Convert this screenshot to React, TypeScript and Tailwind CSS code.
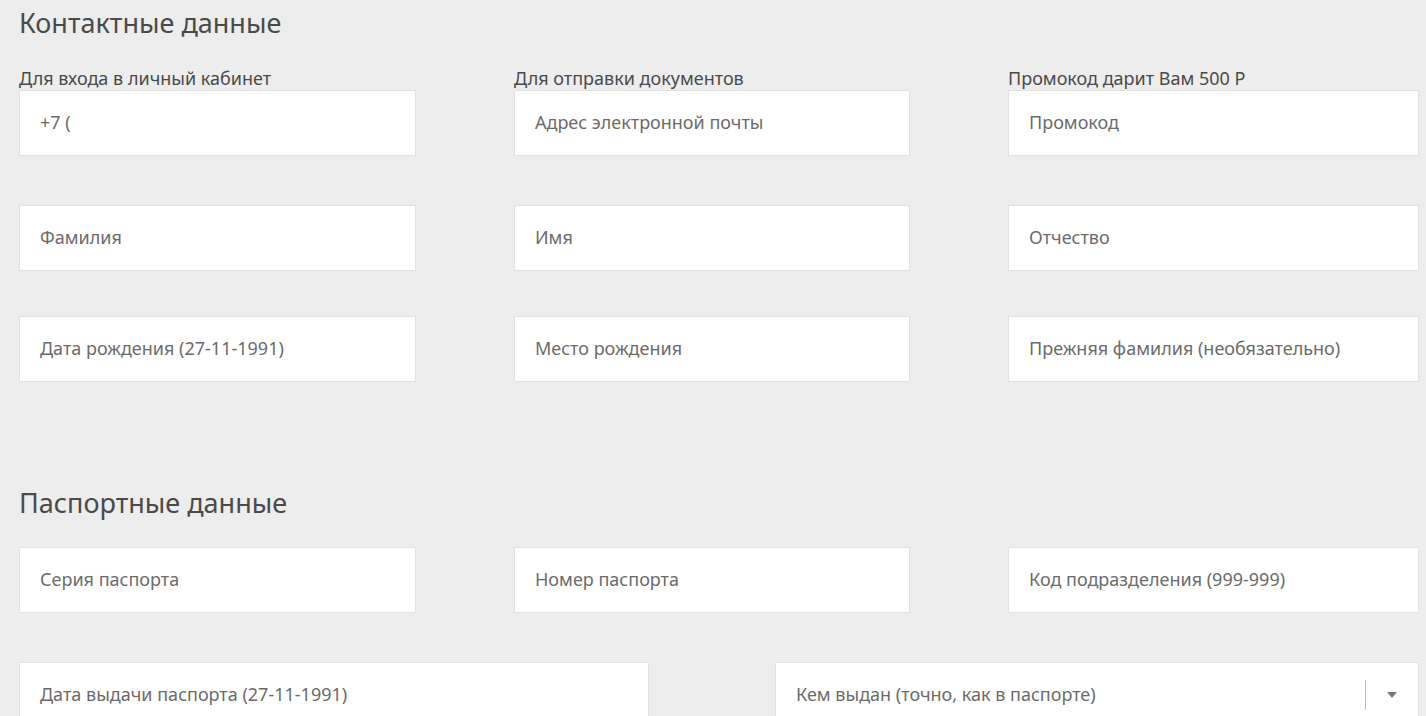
import React from "react";

const font = { fontFamily: '"Noto Sans", "Open Sans", sans-serif' };

function Field({ placeholder, className = "" }: { placeholder: string; className?: string }) {
  return (
    <div className={`h-[66px] bg-white border border-[#e2e2e2] flex items-center pl-[20px] pb-[2px] ${className}`}>
      <span className="text-[18px] text-[#6b6b6b] leading-none">{placeholder}</span>
    </div>
  );
}

function Label({ children }: { children: React.ReactNode }) {
  return <div className="text-[18px] text-[#4a4a4a] leading-[24px] h-[24px]">{children}</div>;
}

export default function App() {
  return (
    <div className="min-h-[716px] w-[1426px] bg-[#ededed] overflow-hidden pl-[19px]" style={font}>
      <h2 className="text-[27px] text-[#4a4a4a] leading-none pt-[9px] h-[66px]">Контактные данные</h2>
      <div className="grid grid-cols-[397px_396px_411px] gap-x-[98px]">
        <div>
          <Label>Для входа в личный кабинет</Label>
          <Field placeholder="+7 (" />
        </div>
        <div>
          <Label>Для отправки документов</Label>
          <Field placeholder="Адрес электронной почты" />
        </div>
        <div>
          <Label>Промокод дарит Вам 500 Р</Label>
          <Field placeholder="Промокод" />
        </div>
      </div>
      <div className="grid grid-cols-[397px_396px_411px] gap-x-[98px] mt-[49px]">
        <Field placeholder="Фамилия" />
        <Field placeholder="Имя" />
        <Field placeholder="Отчество" />
      </div>
      <div className="grid grid-cols-[397px_396px_411px] gap-x-[98px] mt-[45px]">
        <Field placeholder="Дата рождения (27-11-1991)" />
        <Field placeholder="Место рождения" />
        <Field placeholder="Прежняя фамилия (необязательно)" />
      </div>
      <h2 className="text-[27px] text-[#4a4a4a] leading-none mt-[107px] h-[58px]">Паспортные данные</h2>
      <div className="grid grid-cols-[397px_396px_411px] gap-x-[98px]">
        <Field placeholder="Серия паспорта" />
        <Field placeholder="Номер паспорта" />
        <Field placeholder="Код подразделения (999-999)" />
      </div>
      <div className="grid grid-cols-[630px_644px] gap-x-[126px] mt-[49px]">
        <Field placeholder="Дата выдачи паспорта (27-11-1991)" />
        <div className="h-[66px] bg-white border border-[#e2e2e2] flex items-center pl-[20px]">
          <span className="flex-1 text-[18px] text-[#6b6b6b] leading-none pb-[2px]">Кем выдан (точно, как в паспорте)</span>
          <div className="w-px h-[30px] bg-[#bdbdbd]" />
          <div className="w-[52px] flex justify-center">
            <svg width="10" height="6" viewBox="0 0 10 6"><path d="M0 0h10L5 6z" fill="#777" /></svg>
          </div>
        </div>
      </div>
    </div>
  );
}
